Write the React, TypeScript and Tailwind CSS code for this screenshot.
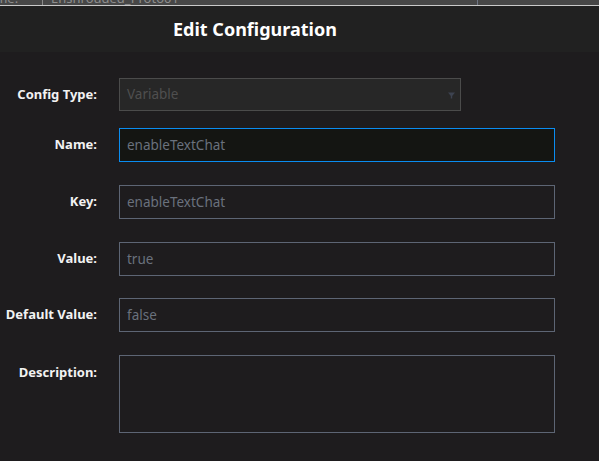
const rows = [
  { label: 'Name:', value: 'enableTextChat', focused: true, gap: 'mt-[17px]' },
  { label: 'Key:', value: 'enableTextChat', gap: 'mt-[23px]' },
  { label: 'Value:', value: 'true', gap: 'mt-[23px]' },
  { label: 'Default Value:', value: 'false', gap: 'mt-[22px]' },
];

const Label = ({ children }: { children: string }) => (
  <div className="w-[97px] shrink-0 text-right text-[13px] font-bold text-[#f2f2f2]">{children}</div>
);

export default function App() {
  return (
    <div className="h-[461px] w-[599px] overflow-hidden bg-[#1e1c1e] font-['Noto_Sans',sans-serif]">
      {/* strip of the window behind */}
      <div className="relative h-[5px] overflow-hidden bg-[#474747]">
        <div className="absolute bottom-[-3px] left-[-22px] flex items-center text-[13px] text-[#8d8d8d]">
          <span className="w-[64px]">Name:</span>
          <span className="border-l border-[#8a8a8a] pl-[8px]">Enshrouded_Proto01</span>
        </div>
        <div className="absolute left-[477px] top-0 h-full w-px bg-[#6e7584]" />
      </div>
      <div className="h-px bg-[#c9c9c9]" />

      <div className="flex h-[46px] items-center bg-[#212121] pl-[173px]">
        <h1 className="text-[18px] font-bold text-white">Edit Configuration</h1>
      </div>

      <div className="flex flex-col pt-[26px]">
        <div className="flex items-center">
          <Label>Config Type:</Label>
          <div className="ml-[22px] flex h-[33px] w-[342px] items-center justify-between border border-[#4b4b4b] bg-[#272727] pl-[7px] pr-[5px] text-[13.5px] text-[#4f4f4f]">
            <span>Variable</span>
            <svg width="7" height="7" viewBox="0 0 7 7" className="mt-[1px]">
              <path d="M0 0.5H7L4.2 4V6.5H2.8V4Z" fill="#3d4350" />
            </svg>
          </div>
        </div>

        {rows.map((r) => (
          <div key={r.label} className={`flex items-center ${r.gap}`}>
            <Label>{r.label}</Label>
            <div
              className={`ml-[22px] flex h-[34px] w-[436px] items-center border pl-[7px] text-[13.5px] text-[#6a717d] ${
                r.focused ? 'border-[#0a8cf0] bg-[#141512]' : 'border-[#5d6574] bg-[#1e1c1e]'
              }`}
            >
              {r.value}
            </div>
          </div>
        ))}

        <div className="mt-[23px] flex items-start">
          <div className="pt-[8px]">
            <Label>Description:</Label>
          </div>
          <div className="ml-[22px] h-[78px] w-[436px] border border-[#5d6574]" />
        </div>
      </div>
    </div>
  );
}
